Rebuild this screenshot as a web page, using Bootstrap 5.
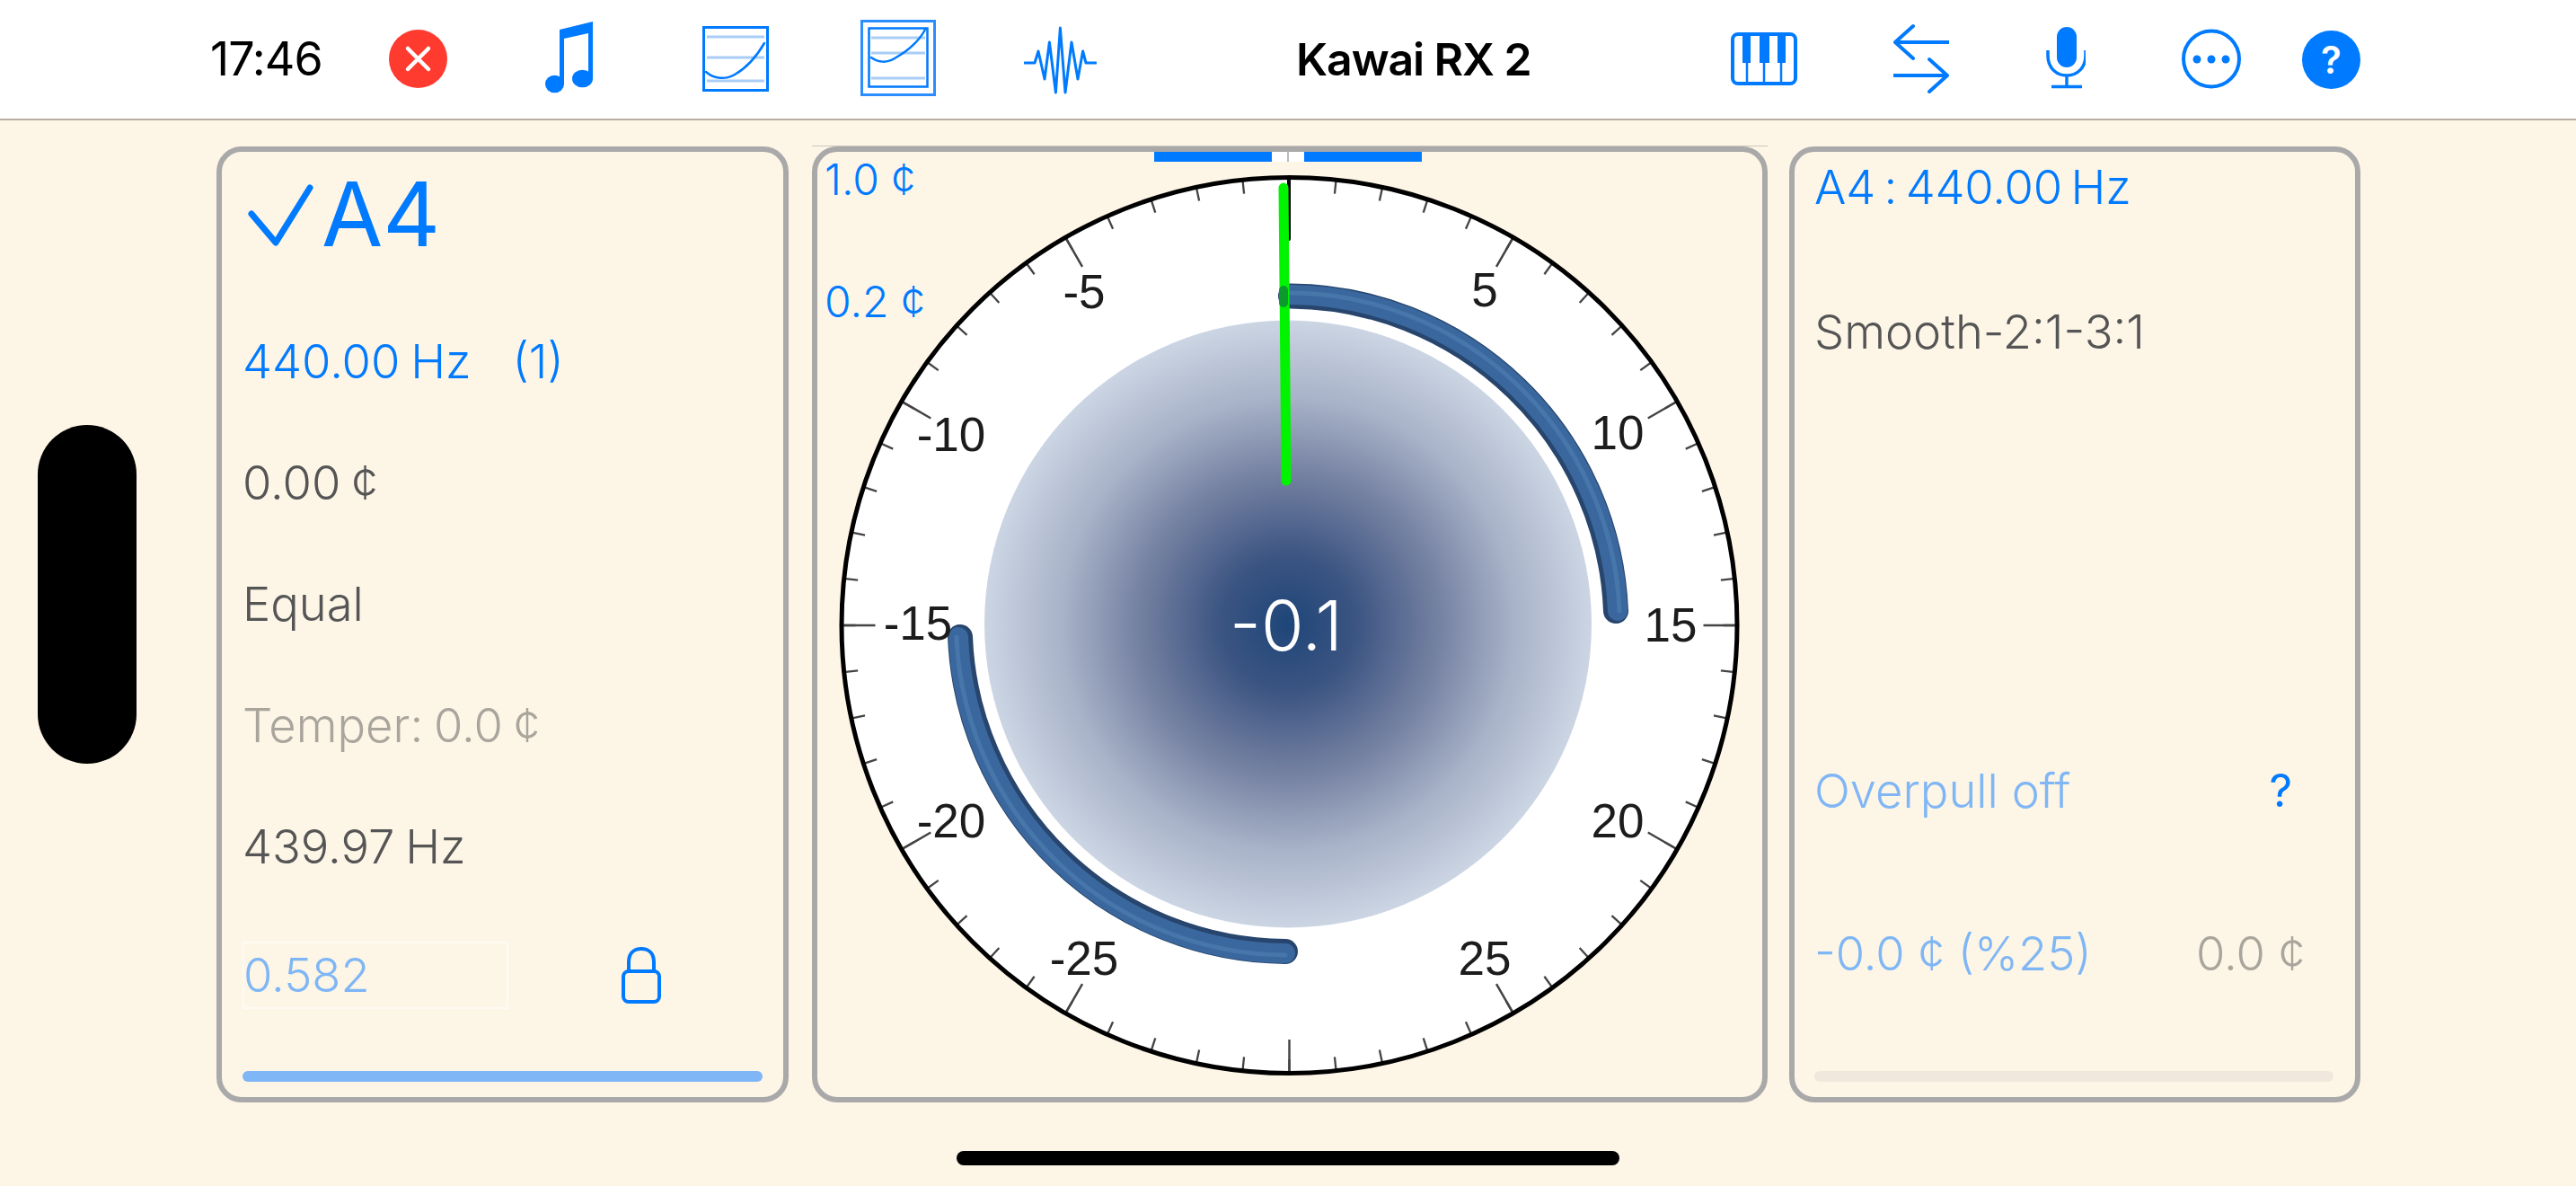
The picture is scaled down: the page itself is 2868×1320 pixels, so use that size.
<!DOCTYPE html>
<html lang="en">
<head>
<meta charset="utf-8">
<title>Kawai RX 2 tuner</title>
<link href="https://cdn.jsdelivr.net/npm/bootstrap@5.3.0/dist/css/bootstrap.min.css" rel="stylesheet">
<style>
html,body{height:100%}
body{background:#fdf5e6;font-family:Inter,"Liberation Sans",sans-serif;font-weight:300;overflow:hidden;color:#555}
.app-frame{width:2868px;height:1320px}
.top-strip{height:134px;background:#fff;border-bottom:2px solid #b8ada0;padding-left:234px;flex:none}
.top-strip svg{height:132px;flex:none;display:block}
.clock{width:124px;font-size:52px;color:#000;font-weight:400;letter-spacing:-1px}
.rig-name{width:259px;margin-left:222px;font-size:50px;font-weight:600;color:#000;white-space:nowrap;letter-spacing:-1.1px}
.m75{margin-left:75px}.m109{margin-left:109px}.m122{margin-left:122px}.m102{margin-left:102px}.m98{margin-left:98px}
.m225{margin-left:225px}.m107{margin-left:107px}.m108{margin-left:108px}.m68{margin-left:68px}
.stage{padding-top:29px;height:1093px;flex:none}
.cam-pill{width:110px;height:377px;background:#000;border-radius:55px;margin:310px 89px 0 42px;flex:none}
.pane{border:6px solid #a9a9a9;border-radius:28px;height:1064px;flex:none}
.pane-left{width:637px;padding:0 23px 17px;margin-right:26px}
.pane-mid{width:1064px;margin-right:24px;position:relative}
.pane-right{width:636px;padding:0 24px 17px 22px}
.note-big{height:138px;color:#007aff;font-size:99px;font-weight:400;line-height:1}
.note-big svg{width:88px;height:90px;flex:none}
.line-row{height:135px;font-size:52.5px;white-space:nowrap;word-spacing:-3px}
.first-row{margin-top:28px}
.tint-blue{color:#007aff}
.tint-soft{color:#7fb6f5}
.tint-grey{color:#a9a59c}
.gap-paren{margin-left:46px}
.tighter-words{word-spacing:-5px;letter-spacing:-.2px}
.amount-row{height:135px;margin-top:8px}
.amount-box{width:296px;height:75px;border:2px solid #fffaf3;font-size:52.5px;color:#7fb6f5;display:flex;align-items:center;text-indent:-1px}
.lock-svg{width:44px;height:63px;margin-left:126px;display:block}
.meter{height:12px;border-radius:6px;flex:none}
.meter-on{background:#7fb6f5}
.meter-off{background:#f0e8dc}
.dial{display:block;width:1052px;height:1052px}
.dial text{font-family:"Liberation Sans",Arial,sans-serif;font-weight:400;font-size:53px;fill:#1c1c1c;text-anchor:middle;dominant-baseline:central}
.dial .read-out{font-family:Inter,sans-serif;font-weight:300;font-size:77px;fill:#fff}
.top-hair{position:absolute;left:-6px;right:-6px;top:-7px;height:1px;background:#ccc6bc}
.center-ruler{position:absolute;left:375px;top:0;width:298px;height:11px;background:linear-gradient(90deg,#007aff 0 131px,#fff 131px 167px,#007aff 167px)}
.center-ruler::after{content:"";position:absolute;left:148px;top:0;width:2px;height:11px;background:#bbb}
.res-label{position:absolute;left:8px;font-size:48px;color:#007aff}
.res-a{top:-5px}
.res-b{top:131px}
.r-row{height:70px;font-size:52.5px;white-space:nowrap}
.r-a{margin-top:4px}.r-b{margin-top:91px}.r-c{margin-top:441px}.r-d{margin-top:111px}
.ask{font-weight:400;font-size:50px;margin-right:46px}
.off-val{margin-right:32px}
.home-bar{width:738px;height:16px;background:#000;border-radius:8px;margin:54px 0 0 1065px;flex:none}
</style>
</head>
<body>
<div class="app-frame d-flex flex-column">
  <header class="top-strip d-flex align-items-center">
    <div class="clock">17:46</div>
    <svg class="m75" viewBox="433 0 65 132" width="65" aria-label="close"><circle cx="465.5" cy="65.5" r="32.5" fill="#ff3b30"/><path d="M454 54l23 23M477 54l-23 23" stroke="#fff" stroke-width="4.5" stroke-linecap="round" fill="none"/></svg>
    <svg class="m109" viewBox="607 0 53 132" width="53" aria-label="note"><g fill="#007aff"><ellipse cx="617.5" cy="93.5" rx="10.5" ry="9.8"/><ellipse cx="648.5" cy="87.5" rx="11.5" ry="9.8"/><path d="M623 33 660 24V88H655V37L628 43V94H623Z"/></g></svg>
    <svg class="m122" viewBox="782 0 74 132" width="74" aria-label="curve"><rect x="783.5" y="30.5" width="71" height="70" fill="#fff" stroke="#007aff" stroke-width="3"/><path d="M787 41H851M787 64H851M787 90H851" stroke="#a9cdf6" stroke-width="3"/><path d="M786 80C795 88 808 89 818 83 832 75 844 60 851 48" stroke="#007aff" stroke-width="2.5" fill="none" stroke-linecap="round"/></svg>
    <svg class="m102" viewBox="958 0 84 132" width="84" aria-label="curve selected"><rect x="959.5" y="23.5" width="81" height="82" fill="#fff" stroke="#2b8dff" stroke-width="3"/><rect x="967.5" y="31.5" width="65" height="65" fill="#fff" stroke="#007aff" stroke-width="2.5"/><path d="M970 42H1030M970 59H1030M970 87H1030" stroke="#a9cdf6" stroke-width="3"/><path d="M970 64C978 70 988 70 996 65 1012 56 1023 46 1030 33" stroke="#007aff" stroke-width="2.5" fill="none" stroke-linecap="round"/></svg>
    <svg class="m98" viewBox="1140 0 81 132" width="81" aria-label="waveform"><polyline points="1141,70 1152,70 1156,57 1163,88 1168.4,47 1175.4,103 1180.4,31 1186,103 1193,47 1200,88 1205.6,57 1209,70 1220,70" fill="none" stroke="#007aff" stroke-width="3" stroke-linejoin="round" stroke-linecap="round"/></svg>
    <div class="rig-name">Kawai RX 2</div>
    <svg class="m225" viewBox="1927 0 74 132" width="74" aria-label="piano"><rect x="1929" y="38" width="70" height="55" rx="6" fill="#fff" stroke="#007aff" stroke-width="4"/><path d="M1940 38h9v32h-9zM1959 38h11v32h-11zM1979 38h9v32h-9z" fill="#007aff"/><path d="M1945 70v23M1964 70v23M1983 70v23" stroke="#007aff" stroke-width="2.5"/></svg>
    <svg class="m107" viewBox="2108 0 62 132" width="62" aria-label="swap"><path d="M2170 47H2110M2130 29 2110 47 2130 65M2108 84H2168M2148 66 2168 84 2148 102" fill="none" stroke="#007aff" stroke-width="4" stroke-linecap="round" stroke-linejoin="round"/></svg>
    <svg class="m108" viewBox="2278 0 44 132" width="44" aria-label="microphone"><rect x="2290" y="30" width="22" height="45" rx="11" fill="#007aff"/><path d="M2280 56V62C2280 75 2289 84 2301 84S2322 75 2322 62V56M2301 84V96M2284 96.500H2318" fill="none" stroke="#007aff" stroke-width="3.500"/></svg>
    <svg class="m107" viewBox="2429 0 66 132" width="66" aria-label="more"><circle cx="2462" cy="65.500" r="31" fill="none" stroke="#007aff" stroke-width="4"/><circle cx="2446" cy="66" r="4.500" fill="#007aff"/><circle cx="2462" cy="66" r="4.500" fill="#007aff"/><circle cx="2478" cy="66" r="4.500" fill="#007aff"/></svg>
    <svg class="m68" viewBox="2563 0 65 132" width="65" aria-label="help"><circle cx="2595.500" cy="66.500" r="32.500" fill="#007aff"/><text x="2595.500" y="82" text-anchor="middle" fill="#fff" font-family="Inter,sans-serif" font-weight="600" font-size="42">?</text></svg>
  </header>

  <main class="stage d-flex align-items-start">
    <div class="cam-pill"></div>

    <section class="pane pane-left d-flex flex-column">
      <div class="note-big d-flex align-items-center">
        <svg viewBox="270 193 88 90" aria-hidden="true"><path d="M280 238 307 270 345 209" fill="none" stroke="#007aff" stroke-width="7" stroke-linecap="round" stroke-linejoin="round"/></svg>
        <span>A4</span>
      </div>
      <div class="line-row first-row d-flex align-items-center tint-blue"><span>440.00 Hz</span><span class="gap-paren">(1)</span></div>
      <div class="line-row d-flex align-items-center">0.00 ¢</div>
      <div class="line-row d-flex align-items-center">Equal</div>
      <div class="line-row d-flex align-items-center tint-grey">Temper: 0.0 ¢</div>
      <div class="line-row d-flex align-items-center">439.97 Hz</div>
      <div class="amount-row d-flex align-items-center">
        <div class="amount-box">0.582</div>
        <svg class="lock-svg" viewBox="692 1052 44 63" aria-label="lock"><rect x="694" y="1079" width="40" height="34" rx="6" fill="none" stroke="#007aff" stroke-width="4"/><path d="M700 1079V1069C700 1059 706 1054 714 1054S728 1059 728 1069V1079" fill="none" stroke="#007aff" stroke-width="4"/></svg>
      </div>
      <div class="meter meter-on mt-auto"></div>
    </section>

    <section class="pane pane-mid">
      <svg class="dial" viewBox="910 169 1052 1052" aria-label="tuning dial">
        <defs>
          <radialGradient id="discFill">
            <stop offset="0" stop-color="#1e4678"/>
            <stop offset=".22" stop-color="#3b5482"/>
            <stop offset=".5" stop-color="#7682a2"/>
            <stop offset=".75" stop-color="#a9b3c9"/>
            <stop offset="1" stop-color="#ccd5e3"/>
          </radialGradient>
        </defs>
        <circle cx="1435.5" cy="696" r="498.500" fill="#fff"/>
        <circle cx="1435.5" cy="696" r="491" fill="none" stroke="#444" stroke-width="16" pathLength="60" stroke-dasharray=".045 .955" stroke-dashoffset=".0225"/>
        <circle cx="1435.5" cy="696" r="480" fill="none" stroke="#444" stroke-width="38" pathLength="12" stroke-dasharray=".01 .99" stroke-dashoffset=".005"/>
        <circle cx="1435.5" cy="696" r="498.500" fill="none" stroke="#000" stroke-width="5"/>
        <rect x="1433" y="197" width="4" height="71" rx="2" fill="#000"/>
        <circle cx="1434" cy="694.500" r="338" fill="url(#discFill)"/>
        <g fill="none" stroke-linecap="round">
          <path d="M1437 329.500A365 365 0 0 1 1799 680" stroke="#27456d" stroke-width="28"/>
          <path d="M1437 328A367 367 0 0 1 1801 680" stroke="#3a689e" stroke-width="22"/>
          <path d="M1437 326A369 369 0 0 1 1803 680" stroke="#4776ab" stroke-width="5"/>
          <path d="M1069 709A365 365 0 0 0 1431 1059" stroke="#27456d" stroke-width="28"/>
          <path d="M1067 709A367 367 0 0 0 1431 1061" stroke="#3a689e" stroke-width="22"/>
          <path d="M1065 709A369 369 0 0 0 1431 1063" stroke="#4776ab" stroke-width="5"/>
        </g>
        <path d="M1429 209 1432 535" stroke="#00f400" stroke-width="11" stroke-linecap="round"/>
        <rect x="1424" y="318" width="10" height="24" rx="5" fill="#0b9a2c"/>
        <text x="1207" y="324">-5</text>
        <text x="1653" y="322">5</text>
        <text x="1059" y="483">-10</text>
        <text x="1801" y="481">10</text>
        <text x="1022" y="693">-15</text>
        <text x="1860" y="695">15</text>
        <text x="1059" y="913">-20</text>
        <text x="1801" y="913">20</text>
        <text x="1207" y="1066">-25</text>
        <text x="1653" y="1066">25</text>
        <text class="read-out" x="1432" y="696">-0.1</text>
      </svg>
      <div class="top-hair"></div>
      <div class="center-ruler"></div>
      <div class="res-label res-a">1.0 ¢</div>
      <div class="res-label res-b">0.2 ¢</div>
    </section>

    <section class="pane pane-right d-flex flex-column">
      <div class="r-row r-a d-flex align-items-center tint-blue tighter-words">A4 : 440.00 Hz</div>
      <div class="r-row r-b d-flex align-items-center">Smooth-2:1-3:1</div>
      <div class="r-row r-c d-flex align-items-center justify-content-between"><span class="tint-soft">Overpull off</span><span class="ask tint-blue">?</span></div>
      <div class="r-row r-d d-flex align-items-center justify-content-between"><span class="tint-soft">-0.0 ¢ (%25)</span><span class="off-val tint-grey">0.0 ¢</span></div>
      <div class="meter meter-off mt-auto"></div>
    </section>
  </main>
  <div class="home-bar"></div>
</div>
<script src="https://cdn.jsdelivr.net/npm/bootstrap@5.3.0/dist/js/bootstrap.bundle.min.js"></script>
</body>
</html>
